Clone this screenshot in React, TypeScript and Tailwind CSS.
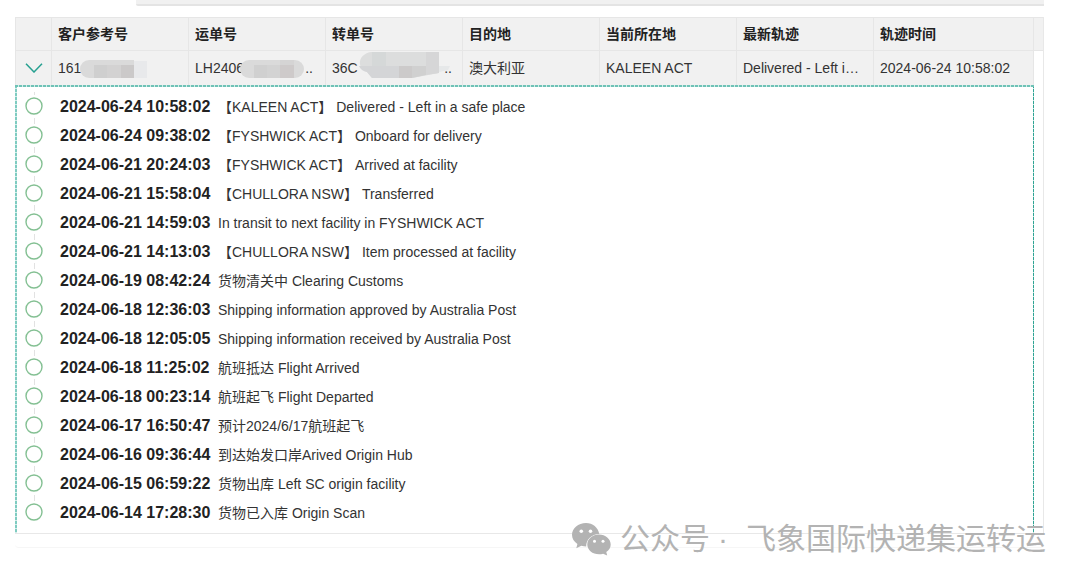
import { ReactNode, useState } from 'react';

interface TrackEvent {
    time: string;
    text: string;
}

const events: TrackEvent[] = [
    { time: '2024-06-24 10:58:02', text: '【KALEEN ACT】 Delivered - Left in a safe place' },
    { time: '2024-06-24 09:38:02', text: '【FYSHWICK ACT】 Onboard for delivery' },
    { time: '2024-06-21 20:24:03', text: '【FYSHWICK ACT】 Arrived at facility' },
    { time: '2024-06-21 15:58:04', text: '【CHULLORA NSW】 Transferred' },
    { time: '2024-06-21 14:59:03', text: 'In transit to next facility in FYSHWICK ACT' },
    { time: '2024-06-21 14:13:03', text: '【CHULLORA NSW】 Item processed at facility' },
    { time: '2024-06-19 08:42:24', text: '货物清关中 Clearing Customs' },
    { time: '2024-06-18 12:36:03', text: 'Shipping information approved by Australia Post' },
    { time: '2024-06-18 12:05:05', text: 'Shipping information received by Australia Post' },
    { time: '2024-06-18 11:25:02', text: '航班抵达 Flight Arrived' },
    { time: '2024-06-18 00:23:14', text: '航班起飞 Flight Departed' },
    { time: '2024-06-17 16:50:47', text: '预计2024/6/17航班起飞' },
    { time: '2024-06-16 09:36:44', text: '到达始发口岸Arived Origin Hub' },
    { time: '2024-06-15 06:59:22', text: '货物出库 Left SC origin facility' },
    { time: '2024-06-14 17:28:30', text: '货物已入库 Origin Scan' },
];

const headers = ['客户参考号', '运单号', '转单号', '目的地', '当前所在地', '最新轨迹', '轨迹时间'];

function ReferenceMask() {
    return (
        <svg className="absolute left-[27px] top-2 h-5 w-[70px]" viewBox="0 0 70 20">
            <path d="M10 1H55V19H10a9 9 0 0 1 0-18z" fill="#dadada" />
            <path d="M15 6H28V19H15z" fill="#cfcfcf" />
            <path d="M28 6H42V19H28z" fill="#d3d2d2" />
            <path d="M42 6H55V19H42z" fill="#cbc9c9" />
            <path d="M55 2H68V19H55z" fill="#e8e9eb" />
        </svg>
    );
}

function WaybillMask() {
    return (
        <svg className="absolute left-[49px] top-2 h-5 w-[68px]" viewBox="0 0 68 20">
            <path d="M11 1H57a9 9 0 0 1 0 18H11a9 9 0 0 1 0-18z" fill="#dadada" />
            <path d="M16 6H29V19H16z" fill="#d0d0d0" />
            <path d="M29 6H42V19H29z" fill="#d3d3d3" />
            <path d="M42 6H56V19H42z" fill="#cecaca" />
            <path d="M42 1H56V6H42z" fill="#d5d4d4" />
        </svg>
    );
}

function TransferMask() {
    return (
        <svg className="absolute left-8 top-0 h-7 w-24" viewBox="0 0 96 28">
            <path d="M13 1H81V22L54 27H14L9 21C-2 17 0 3 13 1z" fill="#dcdddd" />
            <path d="M14 1H28V15H14z" fill="#d5d8d8" />
            <path d="M1 15H41V27H14L9 21Q3 20 1 15z" fill="#d4d5d7" />
            <path d="M41 15H54V27H41z" fill="#cccaca" />
            <path d="M54 15H68V24L54 27z" fill="#d0d0d0" />
            <path d="M68 1H81V22L68 24z" fill="#d6d6d7" />
            <path d="M81 15H92L90 19L81 21z" fill="#e6e8e9" />
        </svg>
    );
}

function TimelineMarker({ last }: { last: boolean }) {
    return (
        <svg className="h-[29px] w-[18px] shrink-0" viewBox="0 0 18 29" fill="none">
            <path d={last ? 'M9.5 0V3' : 'M9.5 0V3M9.5 26V29'} stroke="#e2e2e2" />
            <circle cx="9" cy="14" r="8" stroke="#84c093" strokeWidth="1.4" />
        </svg>
    );
}

function WechatLogo() {
    return (
        <svg className="h-[33px] w-10" viewBox="0 0 40 33">
            <path
                d="M14 0C6.3 0 0 5.2 0 11.8c0 3.7 2 7 5.4 9.2L4.3 25.3 9.3 22.8a18 18 0 0 0 4.9.7C14 16.5 19.5 11 27.3 10.9 26.2 4.7 20.7 0 14 0z"
                fill="#b3b3b3"
            />
            <path
                d="M27 11.5C20.5 11.5 15.3 16 15.3 21.500S20.5 31.300 27 31.300c1.500 0 2.800-.2 4.100-.6l4.100 1.800-.9-3.600c2.800-1.800 4.400-4.400 4.400-7.400 0-5.500-5.200-10-11.700-10z"
                fill="#b3b3b3"
            />
            <g fill="#fff">
                <circle cx="9.3" cy="8.3" r="1.8" />
                <circle cx="18.5" cy="8.3" r="1.8" />
                <circle cx="22.5" cy="18.3" r="1.5" />
                <circle cx="31" cy="18.3" r="1.5" />
            </g>
        </svg>
    );
}

function Cell({ children, className = '' }: { children: ReactNode; className?: string }) {
    return (
        <td className={`relative h-[34px] border-r border-[#e6e6e6] bg-[#f1f1f1] px-[6px] ${className}`}>
            {children}
        </td>
    );
}

export default function App() {
    const [expanded, setExpanded] = useState(true);

    return (
        <main className="bg-white pb-8 pl-[15px] pr-9 font-['Liberation_Sans','Noto_Sans_CJK_SC',sans-serif] text-sm text-[#333]">
            <div className="relative rounded-b border-b border-[#f6f6f6] pb-[13px]">
                {/* Tab strip */}
                <div className="ml-[121px] h-[6px] rounded-bl-xs border-b-2 border-[#e4e4e4] bg-[#f1f1f1]" />

                <div className="mt-[11px] border-b border-r border-[#e8e8e8]">
                    <table className="w-full table-fixed border-separate border-spacing-0 text-left">
                        <colgroup>
                            <col className="w-[37px]" />
                            <col />
                            <col />
                            <col />
                            <col />
                            <col />
                            <col />
                            <col className="w-[160px]" />
                            <col className="w-[9px]" />
                        </colgroup>
                        <thead>
                            <tr className="h-[34px] bg-[#f1f1f1] text-[#222]">
                                <td className="border-y border-l border-r border-[#e6e6e6]" />
                                {headers.map((header) => (
                                    <th key={header} className="border-y border-r border-[#e6e6e6] px-[6px] font-bold">
                                        {header}
                                    </th>
                                ))}
                                <td className="border-y border-[#e6e6e6]" />
                            </tr>
                        </thead>
                        <tbody>
                            <tr>
                                <Cell className="border-l">
                                    <button
                                        type="button"
                                        aria-label="展开轨迹"
                                        aria-expanded={expanded}
                                        onClick={() => setExpanded(!expanded)}
                                        className="ml-[3px] block"
                                    >
                                        <svg className="h-[10px] w-[18px]" viewBox="0 0 18 10" fill="none">
                                            <path d="M1 .8L9 9L17 .8" stroke="#26a090" strokeWidth="1.5" />
                                        </svg>
                                    </button>
                                </Cell>
                                <Cell>
                                    161
                                    <ReferenceMask />
                                </Cell>
                                <Cell>
                                    <div className="flex justify-between pr-[6px]">
                                        <span>LH2406</span>
                                        <span>..</span>
                                    </div>
                                    <WaybillMask />
                                </Cell>
                                <Cell>
                                    <div className="flex justify-between pr-1">
                                        <span>36C</span>
                                        <span>..</span>
                                    </div>
                                    <TransferMask />
                                </Cell>
                                <Cell>澳大利亚</Cell>
                                <Cell>KALEEN ACT</Cell>
                                <Cell>Delivered - Left i…</Cell>
                                <Cell>2024-06-24 10:58:02</Cell>
                                <td />
                            </tr>
                            {expanded && (
                                <tr>
                                    <td
                                        colSpan={8}
                                        className="bg-[repeating-linear-gradient(90deg,#6fc2b6_0_3px,#d3edea_3px_4px),repeating-linear-gradient(180deg,#7fccc1_0_3px,#d3edea_3px_4px),repeating-linear-gradient(180deg,#2fa393_0_3px,#c2e6e1_3px_4px)] bg-[length:100%_2px,2px_100%,1px_100%] bg-[position:left_top,left_top,right_top] bg-no-repeat pb-[6px] pl-[10px] pt-[7px]"
                                    >
                                        <ul>
                                            {events.map((event, index) => (
                                                <li key={event.time} className="flex h-[29px] items-center whitespace-nowrap">
                                                    <TimelineMarker last={index === events.length - 1} />
                                                    <p className="ml-[17px] flex items-baseline">
                                                        <time className="w-[158px] text-base font-bold text-[#222]">
                                                            {event.time}
                                                        </time>
                                                        <span>{event.text}</span>
                                                    </p>
                                                </li>
                                            ))}
                                        </ul>
                                    </td>
                                    <td />
                                </tr>
                            )}
                        </tbody>
                    </table>
                </div>

                {/* Account watermark */}
                <div className="absolute -bottom-[14px] -right-[2px] flex items-center whitespace-nowrap text-[30px] leading-[44px] text-[#b3b3b3]">
                    <WechatLogo />
                    <span className="ml-2">公众号</span>
                    <span className="mx-2">·</span>
                    <span className="ml-[10px]">飞象国际快递集运转运</span>
                </div>
            </div>
        </main>
    );
}
